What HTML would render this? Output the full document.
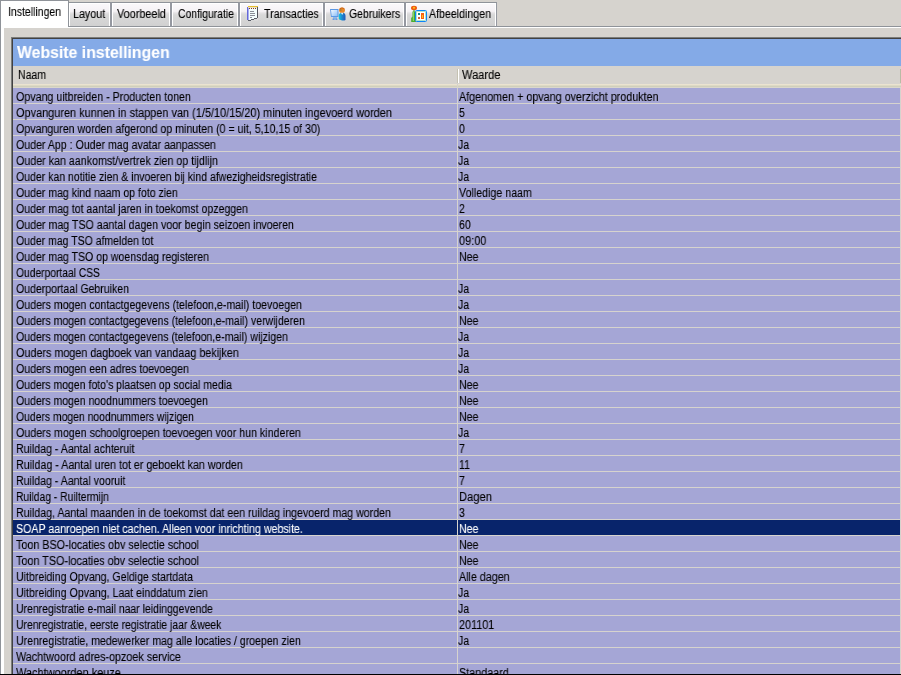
<!DOCTYPE html>
<html lang="nl"><head><meta charset="utf-8"><title>Website instellingen</title>
<style>
html,body{margin:0;padding:0}
body{width:901px;height:675px;overflow:hidden;background:#d6d3ce;position:relative;font-family:"Liberation Sans",sans-serif;font-size:12px;color:#000}
.abs{position:absolute}
span{will-change:transform;-webkit-text-stroke:.1px}
.tab{position:absolute;top:2px;height:25px;box-sizing:border-box;border:1px solid #8f9399;border-left:none;border-right:2px solid #9598a0;background:linear-gradient(#fbf9fb 0,#f5f2f5 36%,#e2e0e2 44%,#d8d8d8 52%,#d1d1d1 100%);box-shadow:inset 1px 1px 0 #fff,inset -1px 0 0 #fff}
.tab.last{border-right-width:1px}
.tab span,.atab span{position:absolute;white-space:nowrap;line-height:14px;font-size:12px;transform-origin:0 50%;display:inline-block}
.atab{position:absolute;left:0;top:0;width:69px;height:27px;box-sizing:border-box;border:1px solid #8f9399;border-bottom:none;background:#fff}
.row{position:absolute;left:13px;width:888px;height:15px;background:#a5a6d6;border-bottom:1px solid #d6d3ce}
.row.sel{background:#08246b;color:#fff}
.row span{position:absolute;top:2px;line-height:14px;white-space:nowrap;font-size:12.5px;transform-origin:0 50%;display:inline-block}
.row i{position:absolute;left:444px;top:0;width:1px;height:16px;background:#d6d3ce}
.row b{position:absolute;left:887px;top:0;width:1px;height:16px;background:#d6d3ce}
.c1{left:2.5px}
.c2{left:445.5px}
.ja{margin-left:-.5px}
</style></head><body>
<div class="abs" style="left:0;top:26px;width:901px;height:1px;background:#8f9399"></div>
<div class="abs" style="left:1px;top:27px;width:900px;height:1px;background:#fff"></div>
<div class="abs" style="left:0;top:0;width:1px;height:675px;background:#8f9399"></div>
<div class="abs" style="left:1px;top:27px;width:3px;height:648px;background:#fff"></div>
<div class="atab"><span id="t0" style="left:6.6px;top:4px;transform:scaleX(0.8745)">Instellingen</span></div>
<div class="tab" style="left:69px;width:43px"><span id="t1" style="left:4.4px;top:4px;transform:scaleX(0.8937)">Layout</span></div>
<div class="tab" style="left:112px;width:60px"><span id="t2" style="left:4.9px;top:4px;transform:scaleX(0.9048)">Voorbeeld</span></div>
<div class="tab" style="left:172px;width:68px"><span id="t3" style="left:5.6px;top:4px;transform:scaleX(0.8653)">Configuratie</span></div>
<div class="tab" style="left:240px;width:85px"><svg class="abs" style="left:7px;top:2px" width="12" height="16" viewBox="0 0 12 16"><rect x="1" y="2" width="10" height="13" fill="#f2fdfd"/><rect x="0" y="2" width="1" height="13" fill="#6468d8"/><rect x="1" y="3" width="1" height="12" fill="#a9adf0"/><rect x="1" y="1" width="10" height="1" fill="#e6bf30"/><rect x="1" y="2" width="10" height="1" fill="#e9e2c4"/><rect x="2" y="3" width="1" height="1" fill="#8a3c1c"/><rect x="4" y="3" width="1" height="1" fill="#8a3c1c"/><rect x="6" y="3" width="1" height="1" fill="#8a3c1c"/><rect x="8" y="3" width="1" height="1" fill="#8a3c1c"/><rect x="3" y="6" width="4" height="1" fill="#8a8e98"/><rect x="3" y="8" width="5" height="1" fill="#8a8e98"/><rect x="3" y="10" width="5" height="1" fill="#8a8e98"/><rect x="3" y="12" width="2" height="1" fill="#8a8e98"/><rect x="10" y="2" width="1" height="11" fill="#50535c"/><path d="M1 16h3v-1h3v-1h3v-1h1v3z" fill="#d9d9d9"/><path d="M1 15h3v1h-3zM4 14h3v1h-3zM7 13h3v1h-3z" fill="#5a5d66"/></svg><span id="t4" style="left:24.0px;top:4px;transform:scaleX(0.8883)">Transacties</span></div>
<div class="tab" style="left:325px;width:81px"><svg class="abs" style="left:5px;top:3px" width="17" height="16" viewBox="0 0 17 16"><defs><linearGradient id="scr" x1="0" y1="0" x2="1" y2="1"><stop offset="0" stop-color="#f4faff"/><stop offset="1" stop-color="#8cc0f8"/></linearGradient><linearGradient id="bod" x1="0" y1="0" x2="1" y2="0"><stop offset="0" stop-color="#12c6e0"/><stop offset=".45" stop-color="#1a8cd0"/><stop offset="1" stop-color="#2458b8"/></linearGradient></defs><path d="M0 3h8.500v8h-7.500z" fill="#5c98e4"/><path d="M1 4h6.500v6h-5.800z" fill="url(#scr)"/><rect x="3" y="11" width="4" height="2" fill="#8db8ec"/><rect x="2.500" y="12.500" width="5" height="1.500" rx=".7" fill="#4c86d4"/><rect x="3.500" y="12.800" width="3" height=".6" fill="#e8f2ff"/><ellipse cx="12" cy="4.200" rx="2.900" ry="2.800" fill="#e88828"/><path d="M9.200 3.700a2.900 2.700 0 0 1 5.700 0c-1-1-2.500-1.400-4-.9z" fill="#c86418"/><rect x="10" y="3.500" width="1.500" height="1" fill="#7a7a48"/><path d="M8.800 9.500c0-2 1.500-2.800 3.200-2.800s3.500 .6 3.500 3v4.300c-2 1-5 .5-6.700 -1z" fill="url(#bod)"/><path d="M11 6.800h2.200l-1 2.200z" fill="#fff"/></svg><span id="t5" style="left:23.7px;top:4px;transform:scaleX(0.8707)">Gebruikers</span></div>
<div class="tab last" style="left:406px;width:91px"><svg class="abs" style="left:5px;top:2px" width="17" height="18" viewBox="0 0 17 18"><ellipse cx="3" cy="3" rx="3" ry="2.200" fill="#ee5a10"/><ellipse cx="3" cy="2.800" rx="1.200" ry="1" fill="#f8c020"/><rect x="2.500" y="5" width="1" height="2" fill="#3c9a20"/><path d="M1.500 6.500h2.800v5l.9 1.500v4h-5v-4l1.300-1.500z" fill="#48ac2c"/><rect x="1.800" y="7" width="1" height="9" fill="#98dc78"/><rect x="4.500" y="5.500" width="11" height="11" rx="1" fill="#fff" stroke="#0a84f8" stroke-width="1"/><rect x="5.500" y="6.500" width="9" height="9" fill="none" stroke="#9fdcc0" stroke-width=".8"/><rect x="7" y="8" width="2" height="2" fill="#109080"/><rect x="7" y="12" width="2" height="2" fill="#c86040"/><rect x="10" y="8" width="3" height="6" fill="#f86010"/><rect x="11" y="10" width="1" height="3" fill="#f8c020"/></svg><span id="t6" style="left:23.4px;top:4px;transform:scaleX(0.8849)">Afbeeldingen</span></div>
<div class="abs" style="left:11px;top:37px;width:890px;height:1px;background:#7b7d7b"></div>
<div class="abs" style="left:11px;top:37px;width:1px;height:638px;background:#7b7d7b"></div>
<div class="abs" style="left:12px;top:38px;width:889px;height:1px;background:#424142"></div>
<div class="abs" style="left:12px;top:38px;width:1px;height:637px;background:#424142"></div>
<div class="abs" style="left:13px;top:39px;width:888px;height:27px;background:#84aae7"><span id="ttl" class="abs" style="left:4px;top:4px;font-weight:bold;font-size:16.5px;line-height:18px;color:#fff;white-space:nowrap;transform-origin:0 50%;transform:scaleX(0.9583)">Website instellingen</span></div>
<div class="abs" style="left:13px;top:66px;width:888px;height:22px;background:#d6d3ce"><div class="abs" style="left:0;top:18px;width:888px;height:1px;background:#ebe3d0"></div><div class="abs" style="left:0;top:19px;width:888px;height:1px;background:#ddd9c5"></div><div class="abs" style="left:0;top:20px;width:888px;height:1px;background:#d0cfbc"></div><div class="abs" style="left:0;top:21px;width:888px;height:1px;background:#dad7cc"></div><div class="abs" style="left:444px;top:18px;width:1px;height:4px;background:#d6d3ce"></div><div class="abs" style="left:444px;top:3px;width:1px;height:14px;background:#c5c2b2"></div><div class="abs" style="left:445px;top:3px;width:1px;height:14px;background:#fff"></div><div class="abs" style="left:887px;top:3px;width:1px;height:14px;background:#b9bba5"></div><span id="h1" class="abs" style="left:4.500px;top:2px;font-size:12px;line-height:14px;white-space:nowrap;transform-origin:0 50%;transform:scaleX(0.8777)">Naam</span><span id="h2" class="abs" style="left:449.400px;top:2px;font-size:12px;line-height:14px;white-space:nowrap;transform-origin:0 50%;transform:scaleX(0.9236)">Waarde</span></div>
<div class="row" style="top:88px"><span id="n0" class="c1" style="transform:scaleX(0.8532)">Opvang uitbreiden - Producten tonen</span><span id="v0" class="c2" style="transform:scaleX(0.8612)">Afgenomen + opvang overzicht produkten</span><i></i><b></b></div>
<div class="row" style="top:104px"><span id="n1" class="c1" style="transform:scaleX(0.8738)">Opvanguren kunnen in stappen van (1/5/10/15/20) minuten ingevoerd worden</span><span id="v1" class="c2" style="transform:scaleX(0.8479)">5</span><i></i><b></b></div>
<div class="row" style="top:120px"><span id="n2" class="c1" style="transform:scaleX(0.8514)">Opvanguren worden afgerond op minuten (0 = uit, 5,10,15 of 30)</span><span id="v2" class="c2" style="transform:scaleX(0.8479)">0</span><i></i><b></b></div>
<div class="row" style="top:136px"><span id="n3" class="c1" style="transform:scaleX(0.8486)">Ouder App : Ouder mag avatar aanpassen</span><span id="v3" class="c2 ja" style="transform:scaleX(0.8479)">Ja</span><i></i><b></b></div>
<div class="row" style="top:152px"><span id="n4" class="c1" style="transform:scaleX(0.8547)">Ouder kan aankomst/vertrek zien op tijdlijn</span><span id="v4" class="c2 ja" style="transform:scaleX(0.8479)">Ja</span><i></i><b></b></div>
<div class="row" style="top:168px"><span id="n5" class="c1" style="transform:scaleX(0.8409)">Ouder kan notitie zien &amp; invoeren bij kind afwezigheidsregistratie</span><span id="v5" class="c2 ja" style="transform:scaleX(0.8479)">Ja</span><i></i><b></b></div>
<div class="row" style="top:184px"><span id="n6" class="c1" style="transform:scaleX(0.8442)">Ouder mag kind naam op foto zien</span><span id="v6" class="c2" style="transform:scaleX(0.8528)">Volledige naam</span><i></i><b></b></div>
<div class="row" style="top:200px"><span id="n7" class="c1" style="transform:scaleX(0.8449)">Ouder mag tot aantal jaren in toekomst opzeggen</span><span id="v7" class="c2" style="transform:scaleX(0.8479)">2</span><i></i><b></b></div>
<div class="row" style="top:216px"><span id="n8" class="c1" style="transform:scaleX(0.8496)">Ouder mag TSO aantal dagen voor begin seizoen invoeren</span><span id="v8" class="c2" style="transform:scaleX(0.8479)">60</span><i></i><b></b></div>
<div class="row" style="top:232px"><span id="n9" class="c1" style="transform:scaleX(0.8391)">Ouder mag TSO afmelden tot</span><span id="v9" class="c2" style="transform:scaleX(0.8759)">09:00</span><i></i><b></b></div>
<div class="row" style="top:248px"><span id="n10" class="c1" style="transform:scaleX(0.8447)">Ouder mag TSO op woensdag registeren</span><span id="v10" class="c2" style="transform:scaleX(0.8479)">Nee</span><i></i><b></b></div>
<div class="row" style="top:264px"><span id="n11" class="c1" style="transform:scaleX(0.8214)">Ouderportaal CSS</span><i></i><b></b></div>
<div class="row" style="top:280px"><span id="n12" class="c1" style="transform:scaleX(0.8419)">Ouderportaal Gebruiken</span><span id="v12" class="c2 ja" style="transform:scaleX(0.8479)">Ja</span><i></i><b></b></div>
<div class="row" style="top:296px"><span id="n13" class="c1" style="transform:scaleX(0.8501)">Ouders mogen contactgegevens (telefoon,e-mail) toevoegen</span><span id="v13" class="c2 ja" style="transform:scaleX(0.8479)">Ja</span><i></i><b></b></div>
<div class="row" style="top:312px"><span id="n14" class="c1" style="transform:scaleX(0.8451)">Ouders mogen contactgegevens (telefoon,e-mail) verwijderen</span><span id="v14" class="c2" style="transform:scaleX(0.8479)">Nee</span><i></i><b></b></div>
<div class="row" style="top:328px"><span id="n15" class="c1" style="transform:scaleX(0.8433)">Ouders mogen contactgegevens (telefoon,e-mail) wijzigen</span><span id="v15" class="c2 ja" style="transform:scaleX(0.8479)">Ja</span><i></i><b></b></div>
<div class="row" style="top:344px"><span id="n16" class="c1" style="transform:scaleX(0.8622)">Ouders mogen dagboek van vandaag bekijken</span><span id="v16" class="c2 ja" style="transform:scaleX(0.8479)">Ja</span><i></i><b></b></div>
<div class="row" style="top:360px"><span id="n17" class="c1" style="transform:scaleX(0.8491)">Ouders mogen een adres toevoegen</span><span id="v17" class="c2 ja" style="transform:scaleX(0.8479)">Ja</span><i></i><b></b></div>
<div class="row" style="top:376px"><span id="n18" class="c1" style="transform:scaleX(0.8410)">Ouders mogen foto's plaatsen op social media</span><span id="v18" class="c2" style="transform:scaleX(0.8479)">Nee</span><i></i><b></b></div>
<div class="row" style="top:392px"><span id="n19" class="c1" style="transform:scaleX(0.8420)">Ouders mogen noodnummers toevoegen</span><span id="v19" class="c2" style="transform:scaleX(0.8479)">Nee</span><i></i><b></b></div>
<div class="row" style="top:408px"><span id="n20" class="c1" style="transform:scaleX(0.8313)">Ouders mogen noodnummers wijzigen</span><span id="v20" class="c2" style="transform:scaleX(0.8479)">Nee</span><i></i><b></b></div>
<div class="row" style="top:424px"><span id="n21" class="c1" style="transform:scaleX(0.8541)">Ouders mogen schoolgroepen toevoegen voor hun kinderen</span><span id="v21" class="c2 ja" style="transform:scaleX(0.8479)">Ja</span><i></i><b></b></div>
<div class="row" style="top:440px"><span id="n22" class="c1" style="transform:scaleX(0.8477)">Ruildag - Aantal achteruit</span><span id="v22" class="c2" style="transform:scaleX(0.8479)">7</span><i></i><b></b></div>
<div class="row" style="top:456px"><span id="n23" class="c1" style="transform:scaleX(0.8570)">Ruildag - Aantal uren tot er geboekt kan worden</span><span id="v23" class="c2" style="transform:scaleX(0.8479)">11</span><i></i><b></b></div>
<div class="row" style="top:472px"><span id="n24" class="c1" style="transform:scaleX(0.8464)">Ruildag - Aantal vooruit</span><span id="v24" class="c2" style="transform:scaleX(0.8479)">7</span><i></i><b></b></div>
<div class="row" style="top:488px"><span id="n25" class="c1" style="transform:scaleX(0.8254)">Ruildag - Ruiltermijn</span><span id="v25" class="c2" style="transform:scaleX(0.8930)">Dagen</span><i></i><b></b></div>
<div class="row" style="top:504px"><span id="n26" class="c1" style="transform:scaleX(0.8496)">Ruildag, Aantal maanden in de toekomst dat een ruildag ingevoerd mag worden</span><span id="v26" class="c2" style="transform:scaleX(0.8479)">3</span><i></i><b></b></div>
<div class="row sel" style="top:520px"><span id="n27" class="c1" style="transform:scaleX(0.8518)">SOAP aanroepen niet cachen. Alleen voor inrichting website.</span><span id="v27" class="c2" style="transform:scaleX(0.8479)">Nee</span><i></i><b></b></div>
<div class="row" style="top:536px"><span id="n28" class="c1" style="transform:scaleX(0.8602)">Toon BSO-locaties obv selectie school</span><span id="v28" class="c2" style="transform:scaleX(0.8479)">Nee</span><i></i><b></b></div>
<div class="row" style="top:552px"><span id="n29" class="c1" style="transform:scaleX(0.8640)">Toon TSO-locaties obv selectie school</span><span id="v29" class="c2" style="transform:scaleX(0.8479)">Nee</span><i></i><b></b></div>
<div class="row" style="top:568px"><span id="n30" class="c1" style="transform:scaleX(0.8458)">Uitbreiding Opvang, Geldige startdata</span><span id="v30" class="c2" style="transform:scaleX(0.8565)">Alle dagen</span><i></i><b></b></div>
<div class="row" style="top:584px"><span id="n31" class="c1" style="transform:scaleX(0.8471)">Uitbreiding Opvang, Laat einddatum zien</span><span id="v31" class="c2 ja" style="transform:scaleX(0.8479)">Ja</span><i></i><b></b></div>
<div class="row" style="top:600px"><span id="n32" class="c1" style="transform:scaleX(0.8359)">Urenregistratie e-mail naar leidinggevende</span><span id="v32" class="c2 ja" style="transform:scaleX(0.8479)">Ja</span><i></i><b></b></div>
<div class="row" style="top:616px"><span id="n33" class="c1" style="transform:scaleX(0.8305)">Urenregistratie, eerste registratie jaar &amp;week</span><span id="v33" class="c2" style="transform:scaleX(0.8628)">201101</span><i></i><b></b></div>
<div class="row" style="top:632px"><span id="n34" class="c1" style="transform:scaleX(0.8454)">Urenregistratie, medewerker mag alle locaties / groepen zien</span><span id="v34" class="c2 ja" style="transform:scaleX(0.8479)">Ja</span><i></i><b></b></div>
<div class="row" style="top:648px"><span id="n35" class="c1" style="transform:scaleX(0.8620)">Wachtwoord adres-opzoek service</span><i></i><b></b></div>
<div class="row" style="top:664px"><span id="n36" class="c1" style="transform:scaleX(0.8760)">Wachtwoorden keuze</span><span id="v36" class="c2" style="transform:scaleX(0.8633)">Standaard</span><i></i><b></b></div>
<div class="abs" style="left:0;top:674px;width:901px;height:1px;background:#000"></div>
</body></html>
